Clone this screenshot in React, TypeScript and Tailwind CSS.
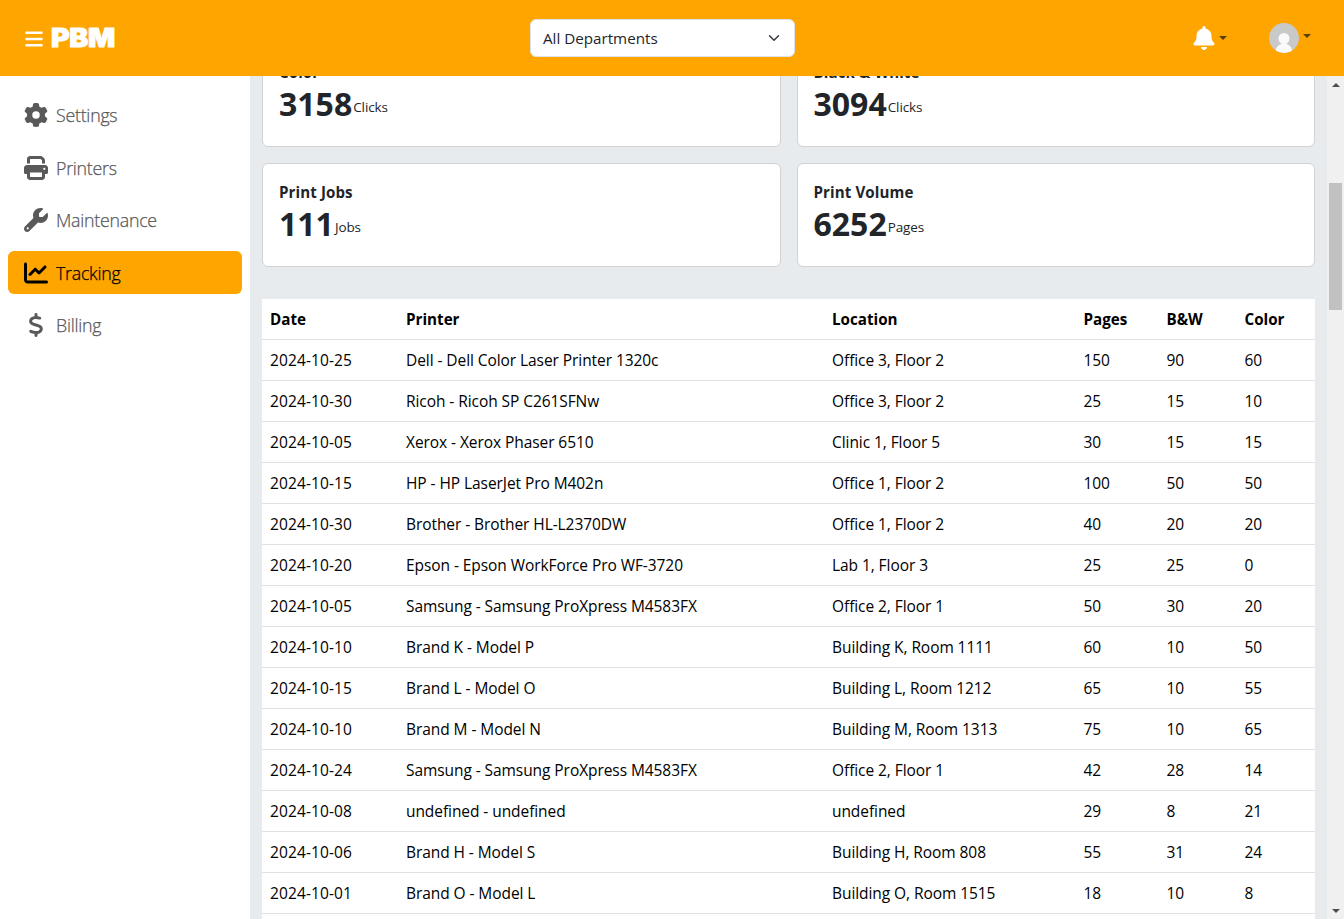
import { FaBars, FaBell, FaChartLine, FaDollarSign, FaGear, FaPrint, FaWrench } from 'react-icons/fa6';
import type { IconType } from 'react-icons';

type NavItem = { label: string; icon: IconType; active?: boolean };

const nav: NavItem[] = [
  { label: 'Settings', icon: FaGear },
  { label: 'Printers', icon: FaPrint },
  { label: 'Maintenance', icon: FaWrench },
  { label: 'Tracking', icon: FaChartLine, active: true },
  { label: 'Billing', icon: FaDollarSign },
];

const stats = [
  { title: 'Color', value: '3158', unit: 'Clicks' },
  { title: 'Black & White', value: '3094', unit: 'Clicks' },
  { title: 'Print Jobs', value: '111', unit: 'Jobs' },
  { title: 'Print Volume', value: '6252', unit: 'Pages' },
];

const columns = ['Date', 'Printer', 'Location', 'Pages', 'B&W', 'Color'];

const rows: (string | number)[][] = [
  ['2024-10-25', 'Dell - Dell Color Laser Printer 1320c', 'Office 3, Floor 2', 150, 90, 60],
  ['2024-10-30', 'Ricoh - Ricoh SP C261SFNw', 'Office 3, Floor 2', 25, 15, 10],
  ['2024-10-05', 'Xerox - Xerox Phaser 6510', 'Clinic 1, Floor 5', 30, 15, 15],
  ['2024-10-15', 'HP - HP LaserJet Pro M402n', 'Office 1, Floor 2', 100, 50, 50],
  ['2024-10-30', 'Brother - Brother HL-L2370DW', 'Office 1, Floor 2', 40, 20, 20],
  ['2024-10-20', 'Epson - Epson WorkForce Pro WF-3720', 'Lab 1, Floor 3', 25, 25, 0],
  ['2024-10-05', 'Samsung - Samsung ProXpress M4583FX', 'Office 2, Floor 1', 50, 30, 20],
  ['2024-10-10', 'Brand K - Model P', 'Building K, Room 1111', 60, 10, 50],
  ['2024-10-15', 'Brand L - Model O', 'Building L, Room 1212', 65, 10, 55],
  ['2024-10-10', 'Brand M - Model N', 'Building M, Room 1313', 75, 10, 65],
  ['2024-10-24', 'Samsung - Samsung ProXpress M4583FX', 'Office 2, Floor 1', 42, 28, 14],
  ['2024-10-08', 'undefined - undefined', 'undefined', 29, 8, 21],
  ['2024-10-06', 'Brand H - Model S', 'Building H, Room 808', 55, 31, 24],
  ['2024-10-01', 'Brand O - Model L', 'Building O, Room 1515', 18, 10, 8],
];

function Caret() {
  return (
    <svg width="8" height="4" viewBox="0 0 8 4" className="text-[#5c3d05]">
      <path d="M0 0h8L4 4z" fill="currentColor" />
    </svg>
  );
}

function Header() {
  return (
    <header className="flex h-[76px] shrink-0 items-center bg-[#ffa500]">
      <div className="flex w-[530px] items-center pl-6 text-white">
        <FaBars className="mt-0.5 size-5" />
        <span className="ml-[7px] inline-block origin-left scale-x-[1.12] font-['Inter'] text-[25.5px] leading-none font-black tracking-[-0.4px] [-webkit-text-stroke:0.8px_white]">
          PBM
        </span>
      </div>
      <button className="flex h-[38px] w-[265px] items-center justify-between rounded-md border border-[#dee2e6] bg-white px-3 text-[15.2px] text-[#212529]">
        <span>All Departments</span>
        <svg width="16" height="12" viewBox="0 0 16 16">
          <path d="m2 5 6 6 6-6" fill="none" stroke="#343a40" strokeWidth="2" strokeLinecap="round" strokeLinejoin="round" />
        </svg>
      </button>
      <div className="ml-[397px] flex items-center gap-[3px]">
        <FaBell className="size-6 text-white" />
        <Caret />
      </div>
      <div className="ml-[42px] flex items-center gap-1">
        <svg width="30" height="30" viewBox="0 0 30 30">
          <defs>
            <clipPath id="avatar">
              <circle cx="15" cy="15" r="15" />
            </clipPath>
          </defs>
          <g clipPath="url(#avatar)">
            <rect width="30" height="30" fill="#c9c9c9" />
            <circle cx="15" cy="15.5" r="5.5" fill="#fafafa" />
            <path d="M12.3 19h5.4v2c3 1 5 3.500 5.500 7l-3 2H9.500l-3-2c.5-3.500 2.800-6 5.800-7z" fill="#fafafa" />
          </g>
        </svg>
        <div className="mb-1">
          <Caret />
        </div>
      </div>
    </header>
  );
}

function Sidebar() {
  return (
    <nav className="flex w-[250px] shrink-0 flex-col gap-[9.6px] bg-white px-2 pt-[17.5px]">
      {nav.map(({ label, icon: Icon, active }) => (
        <a
          key={label}
          className={
            active
              ? 'flex h-[43px] items-center gap-2 rounded-md bg-[#ffa500] pl-4 text-black'
              : 'flex h-[43px] items-center gap-2 rounded-md pl-4 text-[#595959]'
          }
        >
          <Icon className="size-6" />
          <span className="text-[17.8px] leading-6 font-light tracking-[-0.25px] [-webkit-text-stroke:0.25px_currentColor]">
            {label}
          </span>
        </a>
      ))}
    </nav>
  );
}

function ScrollBar() {
  return (
    <div className="flex w-[17px] shrink-0 flex-col items-center bg-[#f0f0f0] text-[#4d4d4d]">
      <svg width="8" height="4" viewBox="0 0 8 4" className="mt-[7px]">
        <path d="M0 4h8L4 0z" fill="currentColor" />
      </svg>
      <div className="mt-24 h-[127px] w-[13px] bg-[#c1c1c1]" />
      <svg width="8" height="4" viewBox="0 0 8 4" className="mt-auto mb-1.5">
        <path d="M0 0h8L4 4z" fill="currentColor" />
      </svg>
    </div>
  );
}

export default function App() {
  return (
    <div className="flex h-[919px] w-[1344px] flex-col overflow-hidden font-['Open_Sans','Noto_Sans',sans-serif]">
      <Header />
      <div className="flex min-h-0 flex-1">
        <Sidebar />
        <main className="min-w-0 flex-1 overflow-hidden bg-[#e7ebee] px-3">
          <div className="-mt-[33px] grid grid-cols-2 gap-4">
            {stats.map((s) => (
              <section
                key={s.title}
                className="h-[104px] rounded-md border border-[#d0d2d4] bg-white px-4 pt-4 text-[#212529]"
              >
                <h2 className="text-[15.1px] leading-6 font-bold tracking-[0.1px]">{s.title}</h2>
                <div className="flex h-10 items-center">
                  <span className="text-[32px] leading-10 font-bold">{s.value}</span>
                  <span className="mt-1.5 ml-px text-[13.5px] leading-5 tracking-[-0.1px]">{s.unit}</span>
                </div>
              </section>
            ))}
          </div>
          <table className="mt-8 w-full table-fixed border-separate border-spacing-0 bg-white text-left text-[15.5px] leading-6 text-black">
            <colgroup>
              <col className="w-[136px]" />
              <col className="w-[426px]" />
              <col className="w-[251.5px]" />
              <col className="w-[83px]" />
              <col className="w-[78px]" />
              <col />
            </colgroup>
            <thead>
              <tr>
                {columns.map((c) => (
                  <th key={c} className="border-b border-[#dee2e6] p-2 text-[15.2px] font-bold">
                    {c}
                  </th>
                ))}
              </tr>
            </thead>
            <tbody>
              {rows.map((r, i) => (
                <tr key={i}>
                  {r.map((cell, j) => (
                    <td
                      key={j}
                      className={
                        j === 0
                          ? 'border-b border-[#dee2e6] p-2 tracking-[0.12px] whitespace-nowrap'
                          : 'border-b border-[#dee2e6] p-2 tracking-[-0.07px] whitespace-nowrap'
                      }
                    >
                      {cell}
                    </td>
                  ))}
                </tr>
              ))}
              <tr>
                <td colSpan={6} className="h-10" />
              </tr>
            </tbody>
          </table>
        </main>
        <ScrollBar />
      </div>
    </div>
  );
}
